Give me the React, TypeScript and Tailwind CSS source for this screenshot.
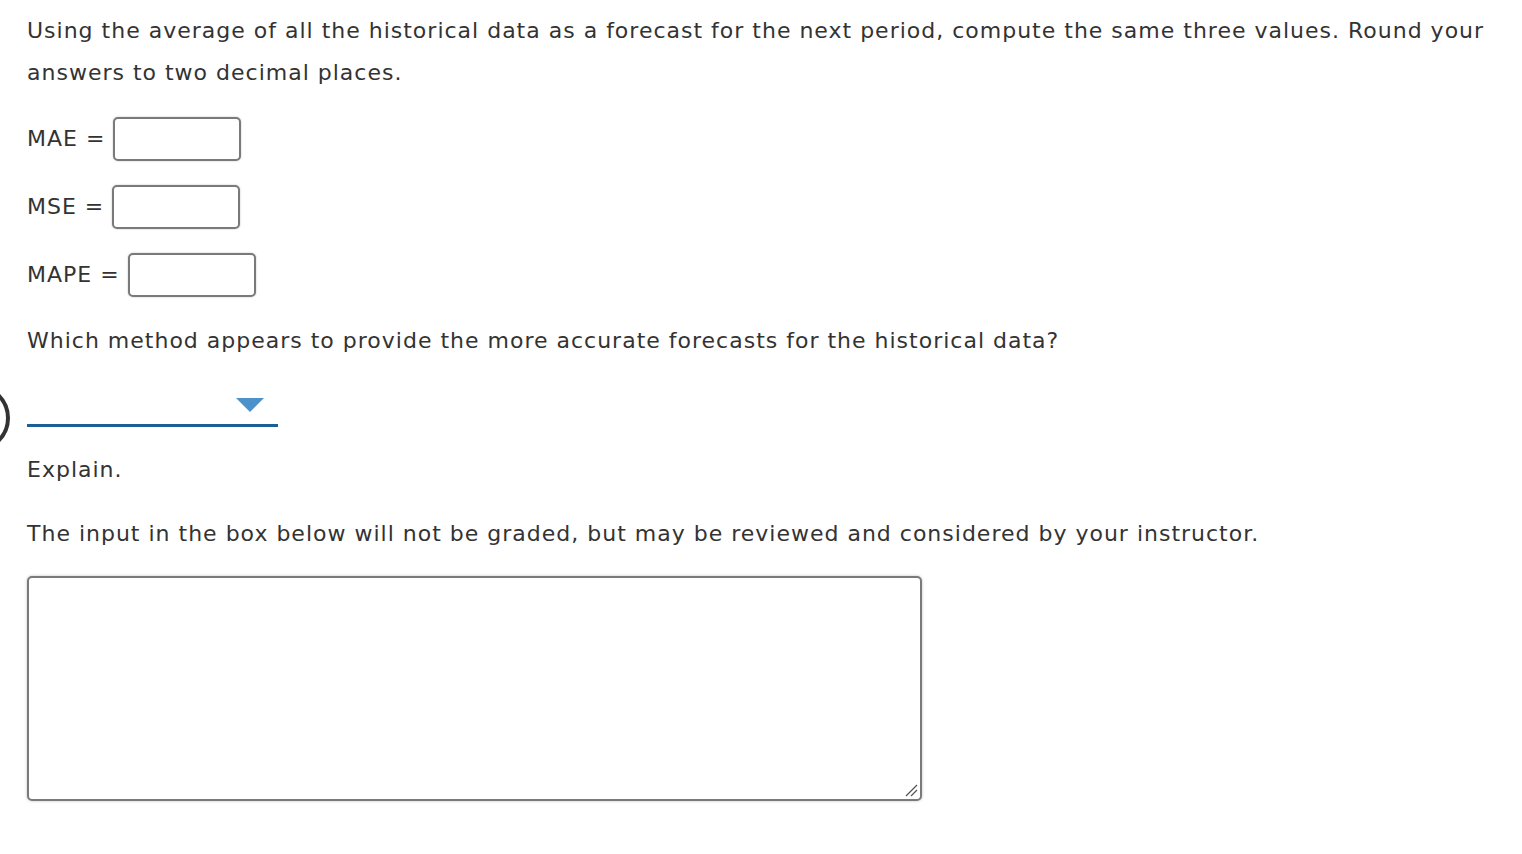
import React from "react";

function Field({ label }: { label: string }) {
  return (
    <div className="flex items-center h-[44px]">
      <span className="mr-[8px]">{label}</span>
      <span className="mr-[8px]">=</span>
      <div className="w-[128px] h-[44px] rounded-[5px] border-2 border-[#7a7a7a] bg-white shadow-[0_0_2px_rgba(0,0,0,0.25)]" />
    </div>
  );
}

export default function App() {
  return (
    <div
      className="relative w-[1522px] h-[854px] bg-white text-[#333333] overflow-hidden"
      style={{ fontFamily: '"DejaVu Sans", Verdana, sans-serif' }}
    >
      <svg className="absolute left-0 top-[383px]" width="14" height="70" viewBox="0 0 14 70">
        <circle cx="-24" cy="35" r="32" fill="none" stroke="#333" strokeWidth="4" />
      </svg>
      <div className="px-[27px] pt-[10px] text-[22px] leading-[42px] tracking-[1px]">
        <p className="whitespace-nowrap">
          Using the average of all the historical data as a forecast for the next period, compute the same three values. Round your
          <br />
          answers to two decimal places.
        </p>
        <div className="flex flex-col gap-[24px] mt-[23px]">
          <Field label="MAE" />
          <Field label="MSE" />
          <Field label="MAPE" />
        </div>
        <p className="mt-[23px]">Which method appears to provide the more accurate forecasts for the historical data?</p>
        <div className="relative mt-[30px] w-[251px] h-[35px] border-b-[3px] border-[#1b5f95]">
          <svg className="absolute left-[209px] top-[6px]" width="28" height="14" viewBox="0 0 28 14">
            <polygon points="0,0 28,0 14,14" fill="#4d91cb" />
          </svg>
        </div>
        <p className="mt-[22px]">Explain.</p>
        <p className="mt-[22px]">The input in the box below will not be graded, but may be reviewed and considered by your instructor.</p>
        <div className="relative mt-[21px] w-[895px] h-[225px] rounded-[5px] border-2 border-[#7a7a7a] bg-white shadow-[0_0_3px_rgba(0,0,0,0.25)]">
          <svg className="absolute right-[2px] bottom-[2px]" width="14" height="14" viewBox="0 0 14 14">
            <line x1="2" y1="13" x2="13" y2="2" stroke="#555" strokeWidth="1.2" />
            <line x1="7" y1="13" x2="13" y2="7" stroke="#555" strokeWidth="1.2" />
          </svg>
        </div>
      </div>
    </div>
  );
}
